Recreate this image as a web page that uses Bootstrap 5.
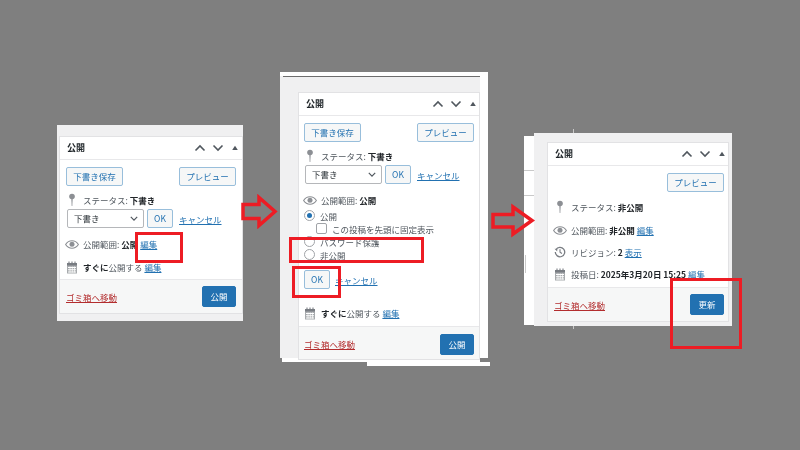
<!DOCTYPE html>
<html lang="ja">
<head>
<meta charset="utf-8">
<title>公開</title>
<link href="https://cdn.jsdelivr.net/npm/bootstrap@5.3.0/dist/css/bootstrap.min.css" rel="stylesheet">
<style>
html,body{height:100%;margin:0;overflow:hidden;}
body{background:#7f7f7f;font-family:"Noto Sans CJK JP","Liberation Sans",sans-serif;font-size:8.5px;line-height:12px;color:#50575e;}
.canvas{position:relative;width:800px;height:450px;overflow:hidden;}
.sheet{position:absolute;background:#f0f0f1;}
.sheet-white{position:absolute;background:#fff;}
.tick{position:absolute;background:#c9c9c9;}
.rule{position:absolute;background:#6d6d6d;}
.box{position:absolute;background:#fff;border:1px solid #e2e2e4;display:flex;flex-direction:column;filter:blur(.45px);}
.box-head{height:23px;flex:none;border-bottom:1px solid #e8e8ea;padding:0 4px 0 7px;display:flex;align-items:center;justify-content:space-between;}
.box-title{font-size:9px;font-weight:700;color:#1d2327;}
.head-icons{display:flex;align-items:center;gap:6px;}
.head-icons svg:last-child{margin-left:2px;}
.box-body{flex:1 1 auto;padding:7px 6px 0 6px;display:flex;flex-direction:column;}
.wp-btn{--bs-btn-padding-x:0;--bs-btn-padding-y:0;--bs-btn-font-size:8.5px;--bs-btn-border-radius:2px;--bs-btn-color:#2271b1;--bs-btn-border-color:#98bedb;--bs-btn-bg:#f6f7f7;--bs-btn-line-height:1;height:19px;display:inline-flex;align-items:center;justify-content:center;font-weight:400;}
.wide{width:57px;}
.small-btn{width:26px;}
.wp-select{width:77px;height:19px;min-height:0;margin-left:1px;border:1px solid #b5b7ba;border-radius:2px;padding:0 0 0 6px;font-size:8.5px;line-height:17px;color:#2c3338;background:#fff url("data:image/svg+xml,%3Csvg xmlns='http://www.w3.org/2000/svg' viewBox='0 0 10 6'%3E%3Cpath d='M1 1l4 4 4-4' fill='none' stroke='%2350575e' stroke-width='1.5'/%3E%3C/svg%3E") no-repeat right 5px center/8px 5px;}
.select-row{margin-top:3px;}
.gap-ok{margin-left:3px;}
.gap-cancel{margin-left:6px;}
.wp-link{color:#2271b1;text-decoration:underline;white-space:nowrap;}
.wp-trash{color:#b32d2e;text-decoration:underline;}
.meta-row{display:flex;align-items:center;white-space:nowrap;height:12px;}
.meta-row svg{flex:none;}
.meta-ico{width:12px;display:flex;justify-content:center;flex:none;margin-right:5px;}
.status-row{margin-top:8px;}
.eye-row{margin-top:10px;}
.cal-row{margin-top:11px;}
.box-foot{height:34px;flex:none;background:#f6f7f7;border-top:1px solid #e8e8ea;display:flex;align-items:center;justify-content:space-between;padding:0 6px;}
.go-btn{--bs-btn-color:#fff;--bs-btn-bg:#2271b1;--bs-btn-border-color:#2271b1;--bs-btn-padding-x:0;--bs-btn-padding-y:0;--bs-btn-font-size:8.5px;--bs-btn-border-radius:2px;width:34px;height:21px;display:inline-flex;align-items:center;justify-content:center;}
.pick{display:flex;align-items:center;gap:5px;height:13px;}
.wp-radio{width:11px;height:11px;border:1px solid #a0a3a7;border-radius:50%;background:#fff;flex:none;display:flex;align-items:center;justify-content:center;}
.wp-radio.on::after{content:"";width:5px;height:5px;border-radius:50%;background:#2271b1;}
.wp-check{width:11px;height:11px;border:1px solid #a0a3a7;border-radius:2px;background:#fff;flex:none;}
.check-row{padding-left:12px;}
.first-pick{margin-top:3px;}
.ok-row{margin-top:9px;gap:5px;}
.cal-row2{margin-top:18px;}
.r3{margin-top:10px;}
.r3.first{margin-top:11px;}
.p2-body{padding-left:5px;padding-right:5px;}
.p3-body{padding-right:4px;}
.p3-status{margin-top:9px;}
.p2-head,.p3-head{padding-right:3px;}
.p3-foot{padding-right:4px;}
.p2-foot{height:33px;padding:2px 5px 0;}

.s1{left:57px;top:125px;width:186px;height:196px;}
.b1{left:59px;top:136px;width:184px;height:178px;}
.w2a{left:280px;top:72px;width:208px;height:286px;}
.w2b{left:282px;top:350px;width:198px;height:12px;}
.w2c{left:367px;top:362px;width:123px;height:4px;}
.s2{left:280px;top:76px;width:200px;height:282px;}
.r2{left:283px;top:76px;width:197px;height:1px;}
.b2{left:298px;top:92px;width:182px;height:268px;}
.w3{left:524px;top:136px;width:12px;height:189px;}
.t3a{left:573px;top:129px;width:1px;height:200px;}
.t3b{left:524px;top:170px;width:10px;height:1px;}
.t3c{left:524px;top:195px;width:10px;height:1px;}
.t3d{left:525px;top:255px;width:1px;height:18px;}
.s3{left:534px;top:133px;width:198px;height:193px;}
.b3{left:547px;top:142px;width:182px;height:180px;}

.red-frame{position:absolute;border:3px solid #ed1c24;}
.f1{left:135px;top:232px;width:48px;height:31px;}
.f2{left:289px;top:237px;width:135px;height:26px;}
.f3{left:292px;top:266px;width:49px;height:32px;}
.f4{left:670px;top:278px;width:72px;height:71px;}
.red-arrow{position:absolute;}
.a1{left:241px;top:194px;}
.a2{left:491px;top:203px;}
</style>
</head>
<body>
<svg width="0" height="0" class="d-none">
<defs>
<symbol id="i-up" viewBox="0 0 12 8"><path d="M1.500 6.500L6 2l4.500 4.500" fill="none" stroke="#50575e" stroke-width="1.600"/></symbol>
<symbol id="i-down" viewBox="0 0 12 8"><path d="M1.500 1.500L6 6l4.500-4.500" fill="none" stroke="#50575e" stroke-width="1.600"/></symbol>
<symbol id="i-tri" viewBox="0 0 6 6"><path d="M3 .8L5.800 5H.2z" fill="#50575e"/></symbol>
<symbol id="i-pin" viewBox="0 0 8 14"><circle cx="4" cy="3.500" r="2.800" fill="#8c8f94"/><path d="M3.300 5h1.400l-.4 8h-.6z" fill="#8c8f94"/></symbol>
<symbol id="i-eye" viewBox="0 0 14 9"><path d="M.6 4.500C2.200 2 4.400.8 7 .8s4.800 1.200 6.400 3.700C11.800 7 9.600 8.200 7 8.200S2.200 7 .6 4.500z" fill="none" stroke="#8c8f94" stroke-width="1.100"/><circle cx="7" cy="4.300" r="2.500" fill="#8c8f94"/></symbol>
<symbol id="i-cal" viewBox="0 0 12 13"><path d="M1 2h10v10.500H1z" fill="#a7aaad"/><path d="M1 2h10v2.500H1z" fill="#787c82"/><path d="M3 .5v3M6 .5v3M9 .5v3" stroke="#787c82" stroke-width="1.100"/><path d="M2 6h8v.9H2zM2 8.300h8v.9H2zM2 10.500h8v.9H2z" fill="#fff"/><path d="M4 5.500v6M6.300 5.500v6M8.500 5.500v6" stroke="#fff" stroke-width=".7"/></symbol>
<symbol id="i-clock" viewBox="0 0 14 14"><path d="M2.300 4.200A5.500 5.500 0 1 1 1.500 7" fill="none" stroke="#787c82" stroke-width="1.500"/><path d="M.6 3.200l3.300.2-.2 3.100z" fill="#787c82"/><path d="M7 3.800V7.300l2.300 1.500" fill="none" stroke="#787c82" stroke-width="1.300"/></symbol>
</defs>
</svg>

<div class="canvas">

<!-- 1 -->
<div class="sheet s1"></div>
<div class="box b1">
  <div class="box-head"><span class="box-title">公開</span>
    <span class="head-icons"><svg width="12" height="8"><use href="#i-up"/></svg><svg width="12" height="8"><use href="#i-down"/></svg><svg width="6" height="6"><use href="#i-tri"/></svg></span></div>
  <div class="box-body">
    <div class="d-flex justify-content-between"><button class="btn wp-btn wide">下書き保存</button><button class="btn wp-btn wide">プレビュー</button></div>
    <div class="meta-row status-row"><span class="meta-ico"><svg width="8" height="14"><use href="#i-pin"/></svg></span><span>ステータス: <b class="text-dark">下書き</b></span></div>
    <div class="d-flex align-items-center select-row"><select class="form-select wp-select"><option>下書き</option></select><button class="btn wp-btn small-btn gap-ok">OK</button><a class="wp-link gap-cancel" href="#">キャンセル</a></div>
    <div class="meta-row eye-row"><span class="meta-ico"><svg width="14" height="9"><use href="#i-eye"/></svg></span><span>公開範囲: <b class="text-dark">公開</b> <a class="wp-link" href="#">編集</a></span></div>
    <div class="meta-row cal-row"><span class="meta-ico"><svg width="12" height="13"><use href="#i-cal"/></svg></span><span><b class="text-dark">すぐに</b>公開する <a class="wp-link" href="#">編集</a></span></div>
  </div>
  <div class="box-foot"><a class="wp-trash" href="#">ゴミ箱へ移動</a><button class="btn go-btn">公開</button></div>
</div>

<!-- 2 -->
<div class="sheet-white w2a"></div>
<div class="sheet-white w2b"></div>
<div class="sheet-white w2c"></div>
<div class="sheet s2"></div>
<div class="rule r2"></div>
<div class="box b2">
  <div class="box-head p2-head"><span class="box-title">公開</span>
    <span class="head-icons"><svg width="12" height="8"><use href="#i-up"/></svg><svg width="12" height="8"><use href="#i-down"/></svg><svg width="6" height="6"><use href="#i-tri"/></svg></span></div>
  <div class="box-body p2-body">
    <div class="d-flex justify-content-between"><button class="btn wp-btn wide">下書き保存</button><button class="btn wp-btn wide">プレビュー</button></div>
    <div class="meta-row status-row"><span class="meta-ico"><svg width="8" height="14"><use href="#i-pin"/></svg></span><span>ステータス: <b class="text-dark">下書き</b></span></div>
    <div class="d-flex align-items-center select-row"><select class="form-select wp-select"><option>下書き</option></select><button class="btn wp-btn small-btn gap-ok">OK</button><a class="wp-link gap-cancel" href="#">キャンセル</a></div>
    <div class="meta-row eye-row"><span class="meta-ico"><svg width="14" height="9"><use href="#i-eye"/></svg></span><span>公開範囲: <b class="text-dark">公開</b></span></div>
    <div class="pick first-pick"><span class="wp-radio on"></span><span>公開</span></div>
    <div class="pick check-row"><span class="wp-check"></span><span>この投稿を先頭に固定表示</span></div>
    <div class="pick"><span class="wp-radio"></span><span>パスワード保護</span></div>
    <div class="pick"><span class="wp-radio"></span><span>非公開</span></div>
    <div class="d-flex align-items-center ok-row"><button class="btn wp-btn small-btn">OK</button><a class="wp-link" href="#">キャンセル</a></div>
    <div class="meta-row cal-row2"><span class="meta-ico"><svg width="12" height="13"><use href="#i-cal"/></svg></span><span><b class="text-dark">すぐに</b>公開する <a class="wp-link" href="#">編集</a></span></div>
  </div>
  <div class="box-foot p2-foot"><a class="wp-trash" href="#">ゴミ箱へ移動</a><button class="btn go-btn">公開</button></div>
</div>

<!-- 3 -->
<div class="tick t3a"></div>
<div class="sheet-white w3"></div>
<div class="tick t3b"></div>
<div class="tick t3c"></div>
<div class="tick t3d"></div>
<div class="sheet s3"></div>
<div class="box b3">
  <div class="box-head p3-head"><span class="box-title">公開</span>
    <span class="head-icons"><svg width="12" height="8"><use href="#i-up"/></svg><svg width="12" height="8"><use href="#i-down"/></svg><svg width="6" height="6"><use href="#i-tri"/></svg></span></div>
  <div class="box-body p3-body">
    <div class="d-flex justify-content-end"><button class="btn wp-btn wide">プレビュー</button></div>
    <div class="meta-row p3-status"><span class="meta-ico"><svg width="8" height="14"><use href="#i-pin"/></svg></span><span>ステータス: <b class="text-dark">非公開</b></span></div>
    <div class="meta-row r3 first"><span class="meta-ico"><svg width="14" height="9"><use href="#i-eye"/></svg></span><span>公開範囲: <b class="text-dark">非公開</b> <a class="wp-link" href="#">編集</a></span></div>
    <div class="meta-row r3"><span class="meta-ico"><svg width="12" height="12"><use href="#i-clock"/></svg></span><span>リビジョン: <b class="text-dark">2</b> <a class="wp-link" href="#">表示</a></span></div>
    <div class="meta-row r3"><span class="meta-ico"><svg width="12" height="13"><use href="#i-cal"/></svg></span><span>投稿日: <b class="text-dark">2025年3月20日 15:25</b> <a class="wp-link" href="#">編集</a></span></div>
  </div>
  <div class="box-foot p3-foot"><a class="wp-trash" href="#">ゴミ箱へ移動</a><button class="btn go-btn">更新</button></div>
</div>

<!-- annotations -->
<div class="red-frame f1"></div>
<div class="red-frame f2"></div>
<div class="red-frame f3"></div>
<div class="red-frame f4"></div>
<svg class="red-arrow a1" width="37" height="35" viewBox="0 0 37 35"><path d="M2 10.500H18V3.500L34 17.500 18 31.500V24.500H2z" fill="none" stroke="#ed1c24" stroke-width="3.500"/></svg>
<svg class="red-arrow a2" width="46" height="35" viewBox="0 0 46 35"><path d="M2 11.500H22V4L41 17.500 22 31V24H2z" fill="none" stroke="#ed1c24" stroke-width="3.500"/></svg>
</div>
</body>
</html>
